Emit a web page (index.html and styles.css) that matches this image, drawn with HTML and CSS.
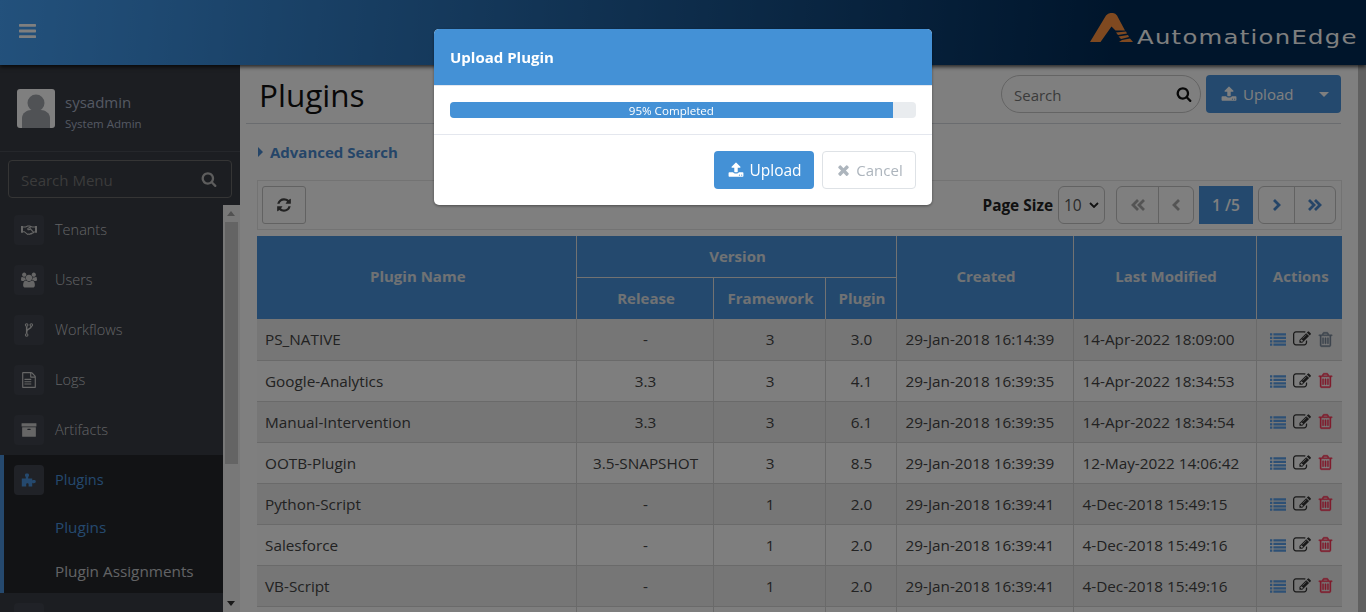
FILE: index.html
```html
<!DOCTYPE html>
<html lang="en">
<head>
    <meta charset="UTF-8">
    <title>Plugins</title>
    <link rel="stylesheet" href="styles.css">
</head>
<body>
    <svg class="sprite" xmlns="http://www.w3.org/2000/svg">
        <symbol id="i-bars" viewBox="0 0 1536 1792"><path d="M1536 1344v128q0 26-19 45t-45 19H64q-26 0-45-19t-19-45v-128q0-26 19-45t45-19h1408q26 0 45 19t19 45zm0-512v128q0 26-19 45t-45 19H64q-26 0-45-19t-19-45V832q0-26 19-45t45-19h1408q26 0 45 19t19 45zm0-512v128q0 26-19 45t-45 19H64q-26 0-45-19T0 448V320q0-26 19-45t45-19h1408q26 0 45 19t19 45z"/></symbol>
        <symbol id="i-search" viewBox="0 0 1792 1792"><path d="M1216 832q0-185-131.500-316.500T768 384 451.500 515.500 320 832t131.500 316.500T768 1280t316.500-131.500T1216 832zm512 832q0 52-38 90t-90 38q-54 0-90-38l-343-342q-179 124-399 124-143 0-273.500-55.500t-225-150-150-225T64 832t55.500-273.500 150-225 225-150T768 128t273.500 55.500 225 150 150 225T1472 832q0 220-124 399l343 343q37 37 37 90z"/></symbol>
        <symbol id="i-upload" viewBox="0 0 1792 1792"><path d="M1344 1472q0-26-19-45t-45-19-45 19-19 45 19 45 45 19 45-19 19-45zm256 0q0-26-19-45t-45-19-45 19-19 45 19 45 45 19 45-19 19-45zm128-224v320q0 40-28 68t-68 28H160q-40 0-68-28t-28-68v-320q0-40 28-68t68-28h427q21 56 70.500 92t110.500 36h256q61 0 110.500-36t70.500-92h427q40 0 68 28t28 68zm-325-648q-17 40-59 40h-256v448q0 26-19 45t-45 19H768q-26 0-45-19t-19-45V640H448q-42 0-59-40-17-39 14-69l448-448q18-19 45-19t45 19l448 448q31 30 14 69z"/></symbol>
        <symbol id="i-times" viewBox="0 0 1408 1792"><path d="M1298 1322q0 40-28 68l-136 136q-28 28-68 28t-68-28l-294-294-294 294q-28 28-68 28t-68-28l-136-136q-28-28-28-68t28-68l294-294-294-294q-28-28-28-68t28-68l136-136q28-28 68-28t68 28l294 294 294-294q28-28 68-28t68 28l136 136q28 28 28 68t-28 68l-294 294 294 294q28 28 28 68z"/></symbol>
        <symbol id="i-refresh" viewBox="0 0 1792 1792"><path d="M1639 1056q0 5-1 7-64 268-268 434.500T892 1664q-146 0-282.500-55T366 1452l-129 129q-19 19-45 19t-45-19-19-45v-448q0-26 19-45t45-19h448q26 0 45 19t19 45-19 45l-137 137q71 66 161 102t187 36q134 0 250-65t186-179q11-17 53-117 8-23 30-23h192q13 0 22.500 9.500t9.500 22.500zm25-800v448q0 26-19 45t-45 19h-448q-26 0-45-19t-19-45 19-45l138-138Q1177 384 892 384q-134 0-250 65T456 628q-11 17-53 117-8 23-30 23H174q-13 0-22.500-9.500T142 736v-7q65-268 270-434.500T896 128q146 0 284 55.500T1425 340l130-129q19-19 45-19t45 19 19 45z"/></symbol>
        <symbol id="i-users" viewBox="0 0 1920 1792"><path d="M593 896q-162 5-265 128H194q-82 0-138-40.500T0 865q0-353 124-353 6 0 43.500 21t97.500 42.500T384 597q67 0 133-23-5 37-5 66 0 139 81 256zm1071 637q0 120-73 189.500t-194 69.500H523q-121 0-194-69.500T256 1533q0-53 3.500-103.500t14-109T300 1212t43-97.500 62-81 85.500-53.500T602 960q10 0 43 21.500t73 48 107 48 135 21.500 135-21.500 107-48 73-48 43-21.500q61 0 111.500 20t85.500 53.500 62 81 43 97.500 26.500 108.500 14 109 3.500 103.500zM640 256q0 106-75 181t-181 75-181-75-75-181 75-181 181-75 181 75 75 181zm704 384q0 159-112.500 271.500T960 1024 688.500 911.500 576 640t112.500-271.500T960 256t271.500 112.500T1344 640zm576 225q0 78-56 118.500t-138 40.500h-134q-103-123-265-128 81-117 81-256 0-29-5-66 66 23 133 23 59 0 119-21.500t97.500-42.500 43.500-21q124 0 124 353zm-128-609q0 106-75 181t-181 75-181-75-75-181 75-181 181-75 181 75 75 181z"/></symbol>
        <symbol id="i-file" viewBox="0 0 1792 1792"><path d="M1596 380q28 28 48 76t20 88v1152q0 40-28 68t-68 28H224q-40 0-68-28t-28-68V96q0-40 28-68t68-28h896q40 0 88 20t76 48zm-444-244v376h376q-10-29-22-41l-313-313q-12-12-41-22zm384 1528V640h-416q-40 0-68-28t-28-68V128H256v1536h1280zM384 800q0-14 9-23t23-9h704q14 0 23 9t9 23v64q0 14-9 23t-23 9H416q-14 0-23-9t-9-23v-64zm736 224q14 0 23 9t9 23v64q0 14-9 23t-23 9H416q-14 0-23-9t-9-23v-64q0-14 9-23t23-9h704zm0 256q14 0 23 9t9 23v64q0 14-9 23t-23 9H416q-14 0-23-9t-9-23v-64q0-14 9-23t23-9h704z"/></symbol>
        <symbol id="i-archive" viewBox="0 0 1792 1792"><path d="M1088 832q0-26-19-45t-45-19H768q-26 0-45 19t-19 45 19 45 45 19h256q26 0 45-19t19-45zm576-192v960q0 26-19 45t-45 19H192q-26 0-45-19t-19-45V640q0-26 19-45t45-19h1408q26 0 45 19t19 45zm64-448v256q0 26-19 45t-45 19H128q-26 0-45-19t-19-45V192q0-26 19-45t45-19h1536q26 0 45 19t19 45z"/></symbol>
        <symbol id="i-trash" viewBox="0 0 1408 1792"><path d="M512 736v576q0 14-9 23t-23 9h-64q-14 0-23-9t-9-23V736q0-14 9-23t23-9h64q14 0 23 9t9 23zm256 0v576q0 14-9 23t-23 9h-64q-14 0-23-9t-9-23V736q0-14 9-23t23-9h64q14 0 23 9t9 23zm256 0v576q0 14-9 23t-23 9h-64q-14 0-23-9t-9-23V736q0-14 9-23t23-9h64q14 0 23 9t9 23zm128 724V512H256v948q0 22 7 40.500t14.500 27T288 1536h832q3 0 10.500-8.500t14.500-27 7-40.500zM480 384h448l-48-117q-7-9-17-11H546q-10 2-17 11zm928 32v64q0 14-9 23t-23 9h-96v948q0 83-47 143.500t-113 60.500H288q-66 0-113-58.500T128 1464V512H32q-14 0-23-9t-9-23v-64q0-14 9-23t23-9h309l70-167q15-37 54-63t79-26h320q40 0 79 26t54 63l70 167h309q14 0 23 9t9 23z"/></symbol>
        <symbol id="i-edit" viewBox="0 0 1792 1792"><path d="M888 1184l116-116-152-152-116 116v56h96v96h56zm440-720q-16-16-33 1L945 815q-17 17-1 33t33-1l350-350q17-17 1-33zm80 594v190q0 119-84.500 203.500T1120 1536H288q-119 0-203.500-84.500T0 1248V416q0-119 84.500-203.500T288 128h832q63 0 117 25 15 7 18 23 3 17-9 29l-49 49q-14 14-32 8-23-6-45-6H288q-66 0-113 47t-47 113v832q0 66 47 113t113 47h832q66 0 113-47t47-113v-126q0-13 9-22l64-64q15-15 35-7t20 29zm-96-738l288 288-672 672H640V992zm444 132l-92 92-288-288 92-92q28-28 68-28t68 28l152 152q28 28 28 68t-28 68z"/></symbol>
        <symbol id="i-list" viewBox="0 0 1792 1792"><path d="M0 256h256v256H0zM0 640h256v256H0zM0 1024h256v256H0zM0 1408h256v256H0zM384 256h1408v256H384zM384 640h1408v256H384zM384 1024h1408v256H384zM384 1408h1408v256H384z"/></symbol>
        <symbol id="i-handshake" viewBox="0 0 24 16"><path d="M0 2h3v10H0zM21 2h3v10h-3z"/><path fill="none" stroke="currentColor" stroke-width="1.6" d="M3 3.500h4l3-1.500h3l4 1.500h4M3 10.500h2l5 4 1.500-.5 1.500.5 1-1 1 .5 1.500-1.500 1 .2L21 10.500M15 3l-4.500 2.500c-1 1 0 2.500 1.500 2l2-1.300 5 5.300"/></symbol>
        <symbol id="i-fork" viewBox="0 0 16 24"><path fill="none" stroke="currentColor" stroke-width="2.600" d="M4 6v12M12 5c0 6-8 4-8 10"/><circle cx="4" cy="3.500" r="2.200" fill="none" stroke="currentColor" stroke-width="1.800"/><circle cx="4" cy="20.500" r="2.200" fill="none" stroke="currentColor" stroke-width="1.800"/><circle cx="12" cy="3.500" r="2.200" fill="none" stroke="currentColor" stroke-width="1.800"/></symbol>
        <symbol id="i-puzzle" viewBox="0 0 20 18"><path d="M1 7h5V5c-1-.5-1-1-1-2 0-1.500 1-2 2.500-2S10 1.500 10 3c0 1 0 1.500-1 2v2h5v3c.5-1 1-1 2-1 1.500 0 2.500.5 2.500 2s-1 2-2.500 2c-1 0-1.500 0-2-1v5H9.500v-2.500c0-1-.5-1.500-1.500-1.500s-1.500.5-1.500 1.500V17H1z"/></symbol>
    </svg>

    <header class="topbar">
        <svg class="icon menu-toggle"><use href="#i-bars"/></svg>
        <div class="brand">
            <svg class="brand-mark" viewBox="0 0 43 30">
                <path d="M0 29 L16 2.500 Q18 0 20.500 0 L23 0 Q25.500 0 27 2.500 L35 17.500 L25.500 17.500 L21.500 13.500 L10.500 29 Z"/>
                <path d="M26 19.500 L36 18.500 L37 20.500 L28 22 Z M28.500 23.500 L38 22 L39 24 L31 26 Z M32 27 L40 25.500 L43 29 L29 29 Z"/>
            </svg>
            <span class="brand-name">AutomationEdge</span>
        </div>
    </header>

    <div class="layout">
        <aside class="sidebar">
            <div class="user-panel">
                <div class="avatar">
                    <svg viewBox="0 0 38 39"><circle cx="19" cy="14" r="8.500"/><path d="M5 39v-10c0-5 5-8 9-8h10c4 0 9 3 9 8v10z"/></svg>
                </div>
                <div class="user-text">
                    <div class="user-name">sysadmin</div>
                    <div class="user-role">System Admin</div>
                </div>
            </div>
            <div class="menu-search">
                <div class="menu-search-box">
                    <span>Search Menu</span>
                    <svg class="icon"><use href="#i-search"/></svg>
                </div>
            </div>
            <div class="menu-wrap">
                <nav class="menu">
                    <a class="menu-item"><span class="menu-icon"><svg class="icon"><use href="#i-handshake"/></svg></span><span class="menu-label">Tenants</span></a>
                    <a class="menu-item"><span class="menu-icon"><svg class="icon"><use href="#i-users"/></svg></span><span class="menu-label">Users</span></a>
                    <a class="menu-item"><span class="menu-icon"><svg class="icon icon-fork"><use href="#i-fork"/></svg></span><span class="menu-label">Workflows</span></a>
                    <a class="menu-item"><span class="menu-icon"><svg class="icon"><use href="#i-file"/></svg></span><span class="menu-label">Logs</span></a>
                    <a class="menu-item"><span class="menu-icon"><svg class="icon"><use href="#i-archive"/></svg></span><span class="menu-label">Artifacts</span></a>
                    <div class="menu-group">
                        <a class="menu-item active"><span class="menu-icon"><svg class="icon"><use href="#i-puzzle"/></svg></span><span class="menu-label">Plugins</span></a>
                        <a class="submenu-item active">Plugins</a>
                        <a class="submenu-item">Plugin Assignments</a>
                    </div>
                    <a class="menu-item"><span class="menu-icon"></span></a>
                </nav>
                <div class="scrollbar side-scroll">
                    <span class="arrow up"></span>
                    <div class="side-thumb"></div>
                    <span class="arrow down"></span>
                </div>
            </div>
        </aside>

        <main class="content">
            <div class="page-head">
                <h1>Plugins</h1>
                <div class="page-actions">
                    <div class="search-pill">
                        <span>Search</span>
                        <svg class="icon"><use href="#i-search"/></svg>
                    </div>
                    <div class="split-btn">
                        <svg class="icon"><use href="#i-upload"/></svg>
                        <span>Upload</span>
                        <i class="caret"></i>
                    </div>
                </div>
            </div>

            <div class="adv-search"><i class="caret-right"></i>Advanced Search</div>

            <div class="toolbar">
                <button class="tool-btn"><svg class="icon"><use href="#i-refresh"/></svg></button>
                <div class="pager-area">
                    <span class="page-size-label">Page Size</span>
                    <div class="page-size">10<svg viewBox="0 0 10 6"><path d="M1 1l4 4 4-4" fill="none" stroke="currentColor" stroke-width="1.800"/></svg></div>
                    <div class="pager-group">
                        <button class="pager-btn muted wide"><svg viewBox="0 0 14 12"><path d="M7 1L2 6l5 5M13 1L8 6l5 5"/></svg></button>
                        <button class="pager-btn muted"><svg viewBox="0 0 14 12"><path d="M10 1L5 6l5 5"/></svg></button>
                    </div>
                    <div class="pager-current">1 /5</div>
                    <div class="pager-group">
                        <button class="pager-btn"><svg viewBox="0 0 14 12"><path d="M4 1l5 5-5 5"/></svg></button>
                        <button class="pager-btn wide"><svg viewBox="0 0 14 12"><path d="M1 1l5 5-5 5M7 1l5 5-5 5"/></svg></button>
                    </div>
                </div>
            </div>

            <table class="grid">
                <colgroup>
                    <col class="c-name"><col class="c-release"><col class="c-framework"><col class="c-plugin"><col class="c-created"><col class="c-modified"><col class="c-actions">
                </colgroup>
                <thead>
                    <tr>
                        <th rowspan="2">Plugin Name</th>
                        <th colspan="3">Version</th>
                        <th rowspan="2">Created</th>
                        <th rowspan="2">Last Modified</th>
                        <th rowspan="2">Actions</th>
                    </tr>
                    <tr class="head-sub">
                        <th>Release</th>
                        <th>Framework</th>
                        <th>Plugin</th>
                    </tr>
                </thead>
                <tbody id="rows"></tbody>
            </table>
        </main>

        <div class="scrollbar page-scroll"></div>
    </div>

    <div class="backdrop">
        <div class="modal">
            <div class="modal-head">Upload Plugin</div>
            <div class="modal-body">
                <div class="progress">
                    <div class="progress-bar" style="width: 95%">95% Completed</div>
                </div>
            </div>
            <div class="modal-foot">
                <button class="btn btn-primary"><svg class="icon"><use href="#i-upload"/></svg>Upload</button>
                <button class="btn btn-cancel"><svg class="icon"><use href="#i-times"/></svg>Cancel</button>
            </div>
        </div>
    </div>

    <script>
        const plugins = [
            ['PS_NATIVE', '-', '3', '3.0', '29-Jan-2018 16:14:39', '14-Apr-2022 18:09:00', true],
            ['Google-Analytics', '3.3', '3', '4.1', '29-Jan-2018 16:39:35', '14-Apr-2022 18:34:53'],
            ['Manual-Intervention', '3.3', '3', '6.1', '29-Jan-2018 16:39:35', '14-Apr-2022 18:34:54'],
            ['OOTB-Plugin', '3.5-SNAPSHOT', '3', '8.5', '29-Jan-2018 16:39:39', '12-May-2022 14:06:42'],
            ['Python-Script', '-', '1', '2.0', '29-Jan-2018 16:39:41', '4-Dec-2018 15:49:15'],
            ['Salesforce', '-', '1', '2.0', '29-Jan-2018 16:39:41', '4-Dec-2018 15:49:16'],
            ['VB-Script', '-', '1', '2.0', '29-Jan-2018 16:39:41', '4-Dec-2018 15:49:16'],
            ['', '', '', '', '', '']
        ];

        const rows = document.getElementById('rows');
        rows.innerHTML = plugins.map(function (p) {
            const actions = p[0] === '' ? '' : `<div class="act-row">
                <svg class="icon act-list"><use href="#i-list"/></svg>
                <svg class="icon act-edit"><use href="#i-edit"/></svg>
                <svg class="icon ${p[6] ? 'act-trash-off' : 'act-trash'}"><use href="#i-trash"/></svg>
            </div>`;
            return `<tr>
                <td>${p[0]}</td>
                <td class="mid">${p[1]}</td>
                <td class="mid">${p[2]}</td>
                <td class="mid">${p[3]}</td>
                <td>${p[4]}</td>
                <td>${p[5]}</td>
                <td class="actions">${actions}</td>
            </tr>`;
        }).join('');
    </script>
</body>
</html>
```

FILE: styles.css
```css
* {
    box-sizing: border-box;
}

html, body {
    height: 100%;
}

body {
    margin: 0;
    font-family: "Open Sans", "Noto Sans", Arial, sans-serif;
    font-size: 14px;
    color: #333;
    background-color: #fff;
    overflow: hidden;
}

button {
    font-family: inherit;
    padding: 0;
}

.sprite {
    display: none;
}

.icon {
    display: block;
    width: 16px;
    height: 16px;
    fill: currentColor;
    flex: none;
}

/* top bar */
.topbar {
    height: 65px;
    display: flex;
    align-items: center;
    justify-content: space-between;
    padding: 0 10px 0 19px;
    background: linear-gradient(95deg, #46a2f8 0%, #002a56 82%, #002a56 100%);
    box-shadow: 0 2px 4px rgba(0, 0, 0, 0.7);
    position: relative;
}

.menu-toggle {
    width: 17px;
    height: 20px;
    margin-top: -4px;
    color: #fff;
}

.brand {
    display: flex;
    align-items: flex-end;
    margin-top: -9px;
}

.brand-mark {
    width: 43px;
    height: 30px;
    fill: #ff9340;
    margin-right: 4px;
}

.brand-name {
    width: 219px;
    font-family: "DejaVu Sans", "Liberation Sans", sans-serif;
    font-size: 19px;
    line-height: 22px;
    letter-spacing: 1px;
    color: #fff;
    white-space: nowrap;
    margin-bottom: -5px;
    transform: scaleX(1.28);
    transform-origin: left;
}

/* layout */
.layout {
    display: flex;
    height: calc(100% - 65px);
}

.sidebar {
    width: 240px;
    flex: none;
    display: flex;
    flex-direction: column;
    background-color: #383c44;
}

.user-panel {
    height: 87px;
    flex: none;
    display: flex;
    align-items: center;
    padding: 0 0 0 17px;
    border-bottom: 1px solid #4a4e56;
}

.avatar {
    width: 38px;
    height: 39px;
    margin-top: 1px;
    border-radius: 3px;
    overflow: hidden;
    background-color: #fff;
}

.avatar svg {
    display: block;
    width: 100%;
    height: 100%;
    fill: #a0a4ab;
}

.user-text {
    margin-left: 10px;
    margin-top: 7px;
}

.user-name {
    font-size: 15px;
    line-height: 20px;
    color: #a9b2c4;
}

.user-role {
    font-size: 11.5px;
    line-height: 16px;
    margin-top: 4px;
    color: #a9b2c4;
}

.menu-search {
    height: 53px;
    flex: none;
    padding: 8px 8px 0;
}

.menu-search-box {
    height: 38px;
    display: flex;
    align-items: center;
    justify-content: space-between;
    padding: 0 14px 0 12px;
    border: 1px solid #6a6a6a;
    border-radius: 4px;
    font-size: 15px;
    color: #777;
}

.menu-search-box span {
    margin-top: 2px;
}

.menu-search-box .icon {
    color: #bbb;
}

.menu-wrap {
    flex: 1;
    display: flex;
    min-height: 0;
}

.menu {
    flex: 1;
    overflow: hidden;
}

.menu-item {
    height: 50px;
    display: flex;
    align-items: center;
    padding-left: 14px;
    font-size: 14.5px;
    font-weight: 300;
    color: #c4c6ca;
}

.menu-label {
    margin-top: -2px;
}

.menu-icon {
    width: 30px;
    height: 30px;
    margin-right: 11px;
    display: flex;
    align-items: center;
    justify-content: center;
    border-radius: 4px;
    background-color: #40454e;
    color: #ccc;
}

.icon-fork {
    height: 14px;
}

.menu-group {
    height: 138px;
    background-color: #24262b;
    box-shadow: inset 4px 0 0 #4a93dc;
}

.menu-item.active {
    color: #4a93dc;
    font-weight: 400;
}

.menu-item.active .menu-icon {
    color: #4a93dc;
    background-color: #40454e;
}

.submenu-item {
    height: 44px;
    display: flex;
    align-items: center;
    padding-left: 55px;
    font-size: 15.3px;
    color: #c4c6ca;
}

.submenu-item.active {
    color: #4a93dc;
}

.scrollbar {
    flex: none;
    background-color: #f1f1f1;
}

.side-scroll {
    width: 17px;
    display: flex;
    flex-direction: column;
    align-items: center;
    position: relative;
}

.side-thumb {
    width: 13px;
    height: 242px;
    margin-top: 17px;
    background-color: #c8c8c8;
}

.arrow {
    position: absolute;
    left: 4px;
    width: 0;
    height: 0;
    border-left: 4px solid transparent;
    border-right: 4px solid transparent;
}

.arrow.up {
    top: 6px;
    border-bottom: 5px solid #a3a3a3;
}

.arrow.down {
    bottom: 6px;
    border-top: 5px solid #333;
}

.page-scroll {
    width: 8px;
    background-color: #c1c1c1;
}

/* page */
.content {
    flex: 1;
    min-width: 0;
    padding: 0 16px 0 17px;
    overflow: hidden;
}

.page-head {
    height: 59px;
    margin: 0 1px 0 -11px;
    padding: 0 0 0 13px;
    display: flex;
    justify-content: space-between;
    border-bottom: 1px solid #d5d8de;
}

h1 {
    margin: 8px 0 0;
    font-size: 31.5px;
    line-height: 44px;
    font-weight: 400;
    color: #111;
}

.page-actions {
    display: flex;
    margin-top: 10px;
    gap: 5px;
}

.search-pill {
    width: 200px;
    height: 38px;
    display: flex;
    align-items: center;
    justify-content: space-between;
    padding: 0 8px 0 12px;
    border: 1px solid #c8c8c8;
    border-radius: 19px;
    font-size: 15px;
    color: #777;
}

.search-pill span {
    margin-top: 2px;
}

.search-pill .icon {
    color: #111;
}

.split-btn {
    width: 135px;
    height: 38px;
    display: flex;
    align-items: center;
    padding-left: 15px;
    border-radius: 4px;
    background-color: #4893dd;
    color: #fff;
    font-size: 15px;
}

.split-btn span {
    margin-left: 6px;
}

.caret {
    width: 0;
    height: 0;
    margin-left: 26px;
    border-left: 5px solid transparent;
    border-right: 5px solid transparent;
    border-top: 5px solid #fff;
}

.adv-search {
    height: 55px;
    display: flex;
    align-items: center;
    padding-left: 1px;
    font-size: 15px;
    font-weight: 700;
    color: #4b8bd0;
}

.caret-right {
    width: 0;
    height: 0;
    margin-right: 7px;
    border-top: 5px solid transparent;
    border-bottom: 5px solid transparent;
    border-left: 5px solid #4b8bd0;
}

.toolbar {
    height: 50px;
    margin-top: 1px;
    display: flex;
    align-items: center;
    justify-content: space-between;
    padding: 0 5px 0 4px;
    border: 1px solid #e6e6e6;
}

.tool-btn {
    width: 44px;
    height: 38px;
    display: flex;
    align-items: center;
    justify-content: center;
    border: 1px solid #c4c4c4;
    border-radius: 3px;
    background-color: #fff;
    color: #444;
}

.pager-area {
    display: flex;
    align-items: center;
}

.page-size-label {
    font-size: 15.4px;
    font-weight: 700;
    color: #222;
    margin-right: 5px;
}

.page-size {
    width: 47px;
    height: 38px;
    display: flex;
    align-items: center;
    justify-content: space-between;
    padding: 0 5px;
    border: 1px solid #c4c4c4;
    border-radius: 6px;
    font-size: 15.5px;
    color: #555;
    margin-right: 11px;
}

.page-size svg {
    width: 10px;
    height: 6px;
    color: #222;
}

.pager-group {
    height: 38px;
    display: flex;
    border: 1px solid #c4c4c4;
    border-radius: 6px;
}

.pager-btn {
    width: 35px;
    height: 100%;
    display: flex;
    align-items: center;
    justify-content: center;
    border: 0;
    border-left: 1px solid #c4c4c4;
    background: none;
    color: #4b8bd0;
}

.pager-btn:first-child {
    border-left: 0;
}

.pager-btn.wide {
    width: 41px;
}

.pager-btn.muted {
    color: #a8a8a8;
}

.pager-btn svg {
    width: 14px;
    height: 12px;
    fill: none;
    stroke: currentColor;
    stroke-width: 2.800;
}

.pager-current {
    width: 54px;
    height: 38px;
    margin: 0 5px;
    display: flex;
    align-items: center;
    justify-content: center;
    background-color: #4893dd;
    color: #fff;
    font-size: 15.5px;
    font-weight: 600;
}

/* table */
.grid {
    width: 1085px;
    margin-top: 6px;
    table-layout: fixed;
    border-collapse: collapse;
}

.c-name { width: 319px; }
.c-release { width: 137px; }
.c-framework { width: 112px; }
.c-plugin { width: 71px; }
.c-created { width: 177px; }
.c-modified { width: 183px; }
.c-actions { width: 86px; }

.grid th {
    height: 41px;
    padding: 0 0 0 3px;
    font-size: 15px;
    font-weight: 700;
    color: #e0e4e8;
    background-color: #4893dd;
    border: 1px solid #e4e4e4;
    border-top: 0;
    border-bottom: 0;
}

.grid th[rowspan] {
    padding-bottom: 3px;
}

.grid th[colspan] {
    padding-bottom: 1px;
}

.grid .head-sub th {
    height: 42px;
}

.grid thead tr:first-child th:nth-child(2) {
    border-bottom: 1px solid #e4e4e4;
}

.grid th:first-child,
.grid td:first-child {
    border-left: 0;
}

.grid th:last-child,
.grid td:last-child {
    border-right: 0;
}

.grid td {
    height: 41px;
    padding: 0 8px 0 9px;
    font-size: 15.3px;
    color: #444;
    border: 1px solid #d4d4d4;
    border-top: 0;
    background-color: #fcfcfc;
}

.grid td:first-child {
    padding-left: 8px;
}

.grid tbody tr:nth-child(odd) td {
    background-color: #ececec;
}

.grid td.mid {
    padding-left: 10px;
    text-align: center;
}

.grid td.actions {
    padding: 0 0 0 13px;
}

.act-row {
    display: flex;
    align-items: center;
}

.act-row .act-list {
    margin-right: 7px;
    color: #5aa0ea;
}

.act-row .act-edit {
    width: 18px;
    height: 18px;
    margin-right: 6px;
    color: #333;
}

.act-row .act-trash,
.act-row .act-trash-off {
    width: 17px;
    height: 17px;
    stroke: currentColor;
    stroke-width: 40;
}

.act-trash { color: #ff3355; }
.act-trash-off { color: #78889a; }

/* modal */
.backdrop {
    position: fixed;
    top: 0;
    right: 0;
    bottom: 0;
    left: 0;
    z-index: 10;
    display: flex;
    justify-content: center;
    padding-top: 29px;
    background-color: rgba(0, 0, 0, 0.5);
}

.modal {
    width: 498px;
    height: 176px;
    overflow: hidden;
    border-radius: 5px;
    background-color: #fff;
    box-shadow: 0 1px 3px rgba(0, 0, 0, 0.4);
}

.modal-head {
    height: 56px;
    display: flex;
    align-items: center;
    padding-left: 16px;
    background-color: #4491d6;
    color: #fff;
    font-size: 15px;
    font-weight: 700;
}

.modal-body {
    height: 50px;
    padding: 16px 16px 0;
    border-top: 1px solid #e4e7ee;
    border-bottom: 1px solid #e4e7ee;
}

.progress {
    height: 16px;
    overflow: hidden;
    border-radius: 4px;
    background-color: #e9ecef;
}

.progress-bar {
    height: 100%;
    background-color: #4491d6;
    text-align: center;
    font-size: 11.6px;
    line-height: 17px;
    color: #fff;
}

.modal-foot {
    display: flex;
    justify-content: flex-end;
    gap: 8px;
    padding: 16px 16px 0;
}

.btn {
    height: 38px;
    display: flex;
    align-items: center;
    justify-content: center;
    border-radius: 4px;
    padding-left: 2px;
}

.btn-primary {
    width: 100px;
    border: 0;
    background-color: #4491d6;
    color: #fff;
    font-size: 15.5px;
}

.btn-primary .icon {
    margin-right: 5px;
}

.btn-cancel {
    width: 94px;
    border: 1px solid #dee2e6;
    background-color: #fff;
    color: #adb5bd;
    font-size: 15px;
}

.btn-cancel .icon {
    width: 13px;
    height: 16px;
    margin-right: 6px;
}
```
